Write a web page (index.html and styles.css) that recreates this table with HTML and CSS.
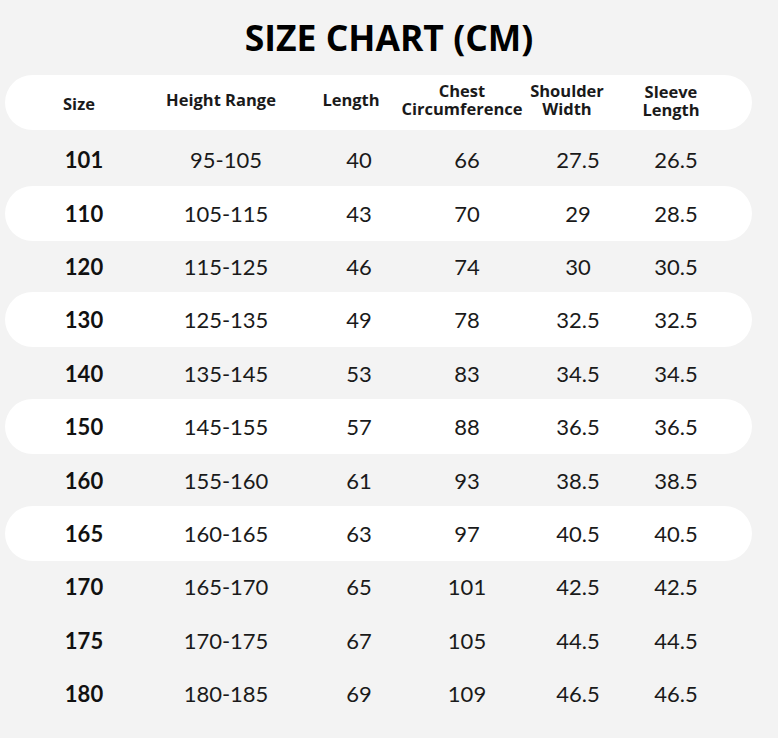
FILE: index.html
```
<!DOCTYPE html>
<html>
<head>
<meta charset="utf-8">
<link rel="stylesheet" href="styles.css">
</head>
<body>
<h1 class="title">SIZE CHART (CM)</h1>
<div class="chart">
  <div class="row head">
    <div class="c c1 size">Size</div>
    <div class="c c2">Height Range</div>
    <div class="c c3 len">Length</div>
    <div class="c c4">Chest<br>Circumference</div>
    <div class="c c5 sh">Shoulder<br>Width</div>
    <div class="c c6 sl">Sleeve<br>Length</div>
  </div>
  <div class="row"><div class="c c1 b">101</div><div class="c c2">95-105</div><div class="c c3">40</div><div class="c c4">66</div><div class="c c5">27.5</div><div class="c c6">26.5</div></div>
  <div class="row pill"><div class="c c1 b">110</div><div class="c c2">105-115</div><div class="c c3">43</div><div class="c c4">70</div><div class="c c5">29</div><div class="c c6">28.5</div></div>
  <div class="row"><div class="c c1 b">120</div><div class="c c2">115-125</div><div class="c c3">46</div><div class="c c4">74</div><div class="c c5">30</div><div class="c c6">30.5</div></div>
  <div class="row pill"><div class="c c1 b">130</div><div class="c c2">125-135</div><div class="c c3">49</div><div class="c c4">78</div><div class="c c5">32.5</div><div class="c c6">32.5</div></div>
  <div class="row"><div class="c c1 b">140</div><div class="c c2">135-145</div><div class="c c3">53</div><div class="c c4">83</div><div class="c c5">34.5</div><div class="c c6">34.5</div></div>
  <div class="row pill"><div class="c c1 b">150</div><div class="c c2">145-155</div><div class="c c3">57</div><div class="c c4">88</div><div class="c c5">36.5</div><div class="c c6">36.5</div></div>
  <div class="row"><div class="c c1 b">160</div><div class="c c2">155-160</div><div class="c c3">61</div><div class="c c4">93</div><div class="c c5">38.5</div><div class="c c6">38.5</div></div>
  <div class="row pill"><div class="c c1 b">165</div><div class="c c2">160-165</div><div class="c c3">63</div><div class="c c4">97</div><div class="c c5">40.5</div><div class="c c6">40.5</div></div>
  <div class="row"><div class="c c1 b">170</div><div class="c c2">165-170</div><div class="c c3">65</div><div class="c c4">101</div><div class="c c5">42.5</div><div class="c c6">42.5</div></div>
  <div class="row"><div class="c c1 b">175</div><div class="c c2">170-175</div><div class="c c3">67</div><div class="c c4">105</div><div class="c c5">44.5</div><div class="c c6">44.5</div></div>
  <div class="row"><div class="c c1 b">180</div><div class="c c2">180-185</div><div class="c c3">69</div><div class="c c4">109</div><div class="c c5">46.5</div><div class="c c6">46.5</div></div>
</div>
</body>
</html>
```
FILE: styles.css
```
html, body {
  margin: 0;
  padding: 0;
  background: #f3f3f3;
}
body {
  width: 778px;
  height: 738px;
  overflow: hidden;
  color: #111;
  font-family: "Lato", "Noto Sans", sans-serif;
}
.title {
  margin: 0;
  padding-top: 15px;
  height: 44px;
  line-height: 44px;
  text-align: center;
  font-family: "Open Sans", sans-serif;
  font-weight: 700;
  font-size: 35.5px;
  color: #000;
}
.chart {
  margin-top: 16px;
  margin-left: 5px;
  width: 747px;
}
.row {
  display: grid;
  grid-template-columns: 158px 126px 140px 76px 146px 50px 51px;
  height: 53.4px;
  align-items: center;
}
.row.head {
  height: 55px;
  background: #fff;
  border-radius: 28px;
  margin-bottom: 3px;
  font-family: "Open Sans", sans-serif;
  font-weight: 700;
  color: #111;
}
.row.head .c {
  font-size: 16.5px;
  line-height: 18px;
  padding-right: 10px;
  padding-bottom: 6px;
  text-align: center;
}
.row.head .size {
  padding-bottom: 0;
  padding-top: 3px;
}
.row.head .len {
  padding-right: 16px;
}
.row.head .sh {
  padding-right: 22px;
  padding-bottom: 5px;
}
.row.head .sl {
  padding-bottom: 3px;
}
.row.pill {
  background: #fff;
  border-radius: 28px;
  height: 55px;
  margin: -0.8px 0;
}
.c {
  display: flex;
  justify-content: center;
  white-space: nowrap;
  min-width: 0;
  font-size: 22px;
  color: #1a1a1a;
}
.c.b {
  font-weight: 700;
  color: #111;
}
```
